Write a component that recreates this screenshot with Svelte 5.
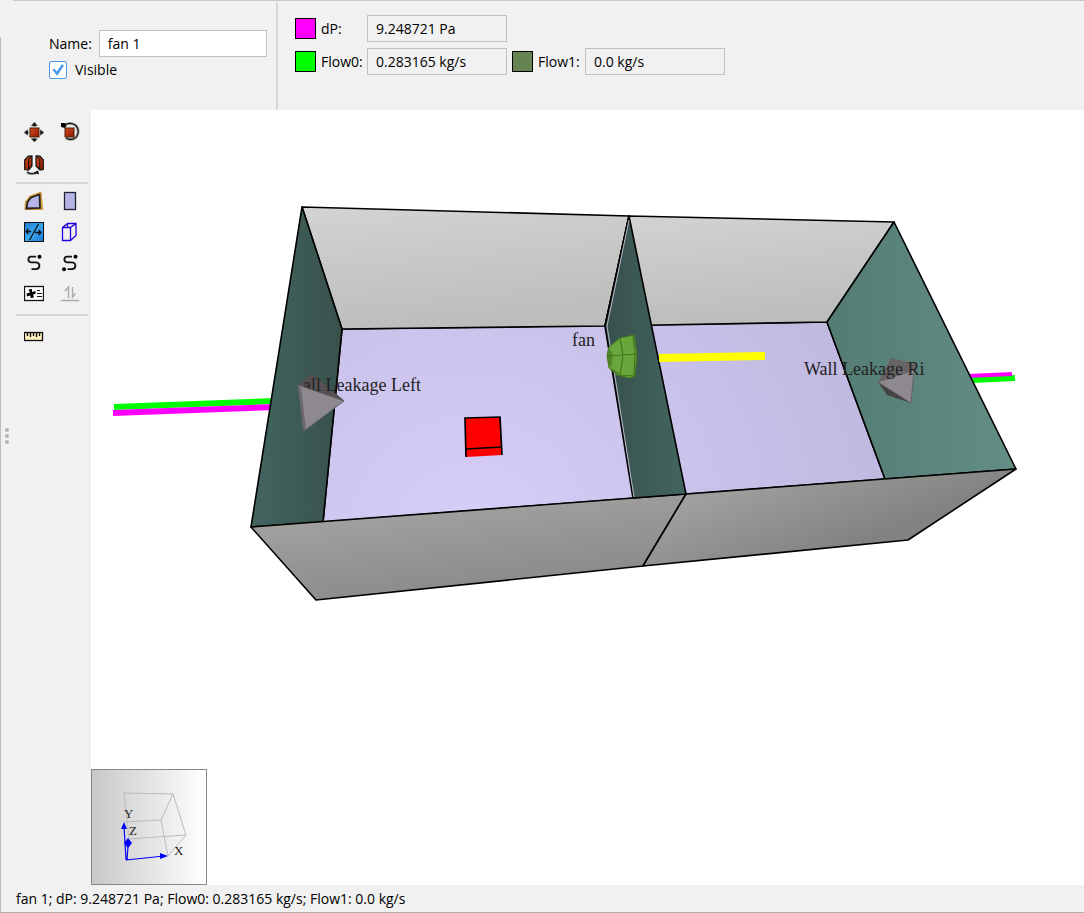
<script>
  let name = "fan 1";
  let visible = true;

  const results = [
    { id: "dp", label: "dP:", value: "9.248721 Pa", color: "#ff00ff", last: true },
    { id: "flow0", label: "Flow0:", value: "0.283165 kg/s", color: "#00ff00" },
    { id: "flow1", label: "Flow1:", value: "0.0 kg/s", color: "#678352" },
  ];

  const toolGroups = [
    { size: "tall", tools: ["Move", "Rotate", "Mirror"] },
    { size: "short", tools: ["Draw floor", "Draw room", "Draw vent", "Draw box", "Draw path", "Edit path", "Device", "Swap flow"] },
    { size: "short", tools: ["Measure"] },
  ];

  $: status =
    name + "; " + results.map((r) => r.label + " " + r.value).join("; ");
</script>

<div class="app">
  <div class="splitter"><i></i><i></i><i></i></div>
  <div class="main">
    <header>
      <form class="object" on:submit|preventDefault>
        <div class="name-row">
          <label for="name">Name:</label>
          <input id="name" type="text" bind:value={name} />
        </div>
        <label class="check">
          <input type="checkbox" bind:checked={visible} />
          Visible
        </label>
      </form>
      <div class="results">
        {#each results as r}
          <span class="swatch" style="background: {r.color}"></span>
          <label for={r.id}>{r.label}</label>
          <input id={r.id} class:last={r.last} type="text" readonly value={r.value} />
        {/each}
      </div>
    </header>

    <div class="work">
      <nav>
        {#each toolGroups as group}
          <div class="tools {group.size}">
            {#each group.tools as tool}
              <button type="button" aria-label={tool} disabled={tool === "Swap flow"}>
                <svg width="20" height="20" viewBox="0 0 20 20">
                  {#if tool === "Move"}
                    <rect x="6" y="6" width="9" height="9" fill="url(#brick)" stroke="#420" />
                    <g fill="#111" stroke="#999" stroke-width=".6">
                      <path d="M0 10.5 3.5 7.5 4.5 10.5 3.5 13.5z" />
                      <path d="M20 10.5 16.5 7.5 15.8 10.5 16.5 13.5z" />
                      <path d="M10.5 0 7 3.8 10.5 4.5 13.5 3.8z" />
                      <path d="M10.5 20 7 17 10.5 16 13.5 17z" />
                    </g>
                  {:else if tool === "Rotate"}
                    <path d="M5 3C13-1 19 4 18 11C17 17 11 19 6 16" fill="none" stroke="#aaa" stroke-width="3" />
                    <path d="M5 2.5C13-1 19 4 18 11C17 17 11 19 6 16" fill="none" stroke="#111" stroke-width="1.2" />
                    <path d="M1 1H5L6.5 4 5 6 1 5z" />
                    <rect x="5" y="6" width="9" height="9" fill="url(#brick)" stroke="#420" />
                  {:else if tool === "Mirror"}
                    <g fill="url(#brick)" stroke="#111" stroke-width="1.2">
                      <path d="M.7 5 4.5 1.2 8 1V11L4.5 15 .7 14.5z" />
                      <path d="M19.3 5 16 1.2 12 1V11L16 15 19.3 14.5z" />
                    </g>
                    <path d="M4.5 4V15M4.5 4 8 1M15.8 4V15M15.8 4 12 1" stroke="#111" />
                    <path d="M3 17C5 19 9 19 12 18" fill="none" stroke="#999" stroke-width="2.5" />
                    <path d="M3 17C5 19 9 19 12 18" fill="none" stroke="#111" />
                    <path d="M10 17.5 14 15.5 15 19.5z" />
                  {:else if tool === "Draw floor"}
                    <path d="M16 2.5 17.5 17.5 2 17.5 2.5 11 6.5 6z" fill="#b6b6e6" stroke="#d49a37" stroke-width="3" />
                    <path d="M15.5 3.5 16 17 2.5 17.5 3.5 11 7 6.5z" fill="#b6b6e6" stroke="#222" stroke-width="1.8" />
                  {:else if tool === "Draw room"}
                    <rect x="4.5" y="1.5" width="11" height="17" fill="#b4b4e8" stroke="#223" stroke-width="1.3" />
                  {:else if tool === "Draw vent"}
                    <rect x=".5" y=".5" width="19" height="19" fill="url(#sky)" stroke="#111" />
                    <path d="M5.5 18 14.5 2M2 9.5H7M11 10.5H17M14.5 8 17 10.5 14.5 13M4.5 7 2 9.5 4.5 12" fill="none" stroke="#111" stroke-width="1.3" />
                  {:else if tool === "Draw box"}
                    <path d="M2.5 5.5H10.5V18.5H2.5zM2.5 5.5 7.5 1.5H16V13.5L10.5 18.5M10.5 5.5 16 1.5M7.5 1.5V5.5" fill="none" stroke="#2000d8" stroke-width="1.3" />
                  {:else if tool === "Draw path" || tool === "Edit path"}
                    <path d="M12 3.7H7C3.5 4 3.5 9 7 9.3H12C17 10 16 16 12 16.2H7.5" fill="none" stroke="#111" stroke-width="1.8" />
                    <circle cx="15.5" cy="3.7" r="2" />
                    {#if tool === "Edit path"}<circle cx="4" cy="16.3" r="2" />{/if}
                  {:else if tool === "Device"}
                    <rect x=".5" y="2.5" width="19" height="14" fill="#fff" stroke="#111" stroke-width="1.3" />
                    <path d="M4.5 5.5 8 5 8 8 11.5 7 11.5 10 9 10.5 10 13.5 6.5 14 6.5 11.5 3 12.5 2.5 9.5 6 8.5z" />
                    <path d="M13 6.5H16M13 9.5H18M13 12.5H18" stroke="#111" stroke-width="1.2" />
                  {:else if tool === "Swap flow"}
                    <path d="M1 16.5H19M8.5 14V3L5 7M12.5 3V13L15.5 9.5" fill="none" stroke="#aaa" stroke-width="1.4" />
                  {:else}
                    <rect x=".5" y="6.5" width="18" height="8" fill="#fff0bd" stroke="#111" stroke-width="1.3" />
                    <path d="M3.5 7V10M6.5 7V11M9.5 7V10M12.5 7V11M15.5 7V10" stroke="#111" stroke-width="1.4" />
                  {/if}
                </svg>
              </button>
            {/each}
          </div>
        {/each}
      </nav>

      <div class="view">
        <svg class="scene" viewBox="91 110 993 775" role="img" aria-label="Model view">
          <defs>
            <linearGradient id="brick" x2="1" y2="1">
              <stop stop-color="#d84a20" /><stop offset="1" stop-color="#8a1800" />
            </linearGradient>
            <linearGradient id="sky" x2="1" y2="1">
              <stop stop-color="#1b78d0" /><stop offset=".5" stop-color="#3ba6f0" /><stop offset="1" stop-color="#1b78d0" />
            </linearGradient>
            <linearGradient id="back" x2=".25" y2="1">
              <stop stop-color="#d3d3d1" /><stop offset="1" stop-color="#bdbdbb" />
            </linearGradient>
            <linearGradient id="front" gradientUnits="userSpaceOnUse" x1="470" y1="508" x2="480" y2="592">
              <stop stop-color="#9f9f9d" /><stop offset="1" stop-color="#8a8a88" />
            </linearGradient>
            <linearGradient id="front-right" gradientUnits="userSpaceOnUse" x1="780" y1="470" x2="815" y2="560">
              <stop stop-color="#9e9e9c" /><stop offset="1" stop-color="#828280" />
            </linearGradient>
            <radialGradient id="floor" gradientUnits="userSpaceOnUse" cx="470" cy="540" r="430">
              <stop stop-color="#d7cff9" /><stop offset="1" stop-color="#bfb8df" />
            </radialGradient>
            <linearGradient id="dark">
              <stop stop-color="#43655f" /><stop offset="1" stop-color="#38514c" />
            </linearGradient>
            <linearGradient id="middle">
              <stop stop-color="#38514d" /><stop offset="1" stop-color="#43655f" />
            </linearGradient>
            <linearGradient id="teal">
              <stop stop-color="#547c73" /><stop offset="1" stop-color="#628e86" />
            </linearGradient>
          </defs>

          <!-- pressure and flow bars behind the walls -->
          <path d="M114 407 275 401M972 380 1015 378" stroke="#0f0" stroke-width="6" />
          <path d="M113 413 275 407" stroke="#f0f" stroke-width="6" />
          <path d="M968 376 1012 374" stroke="#f0f" stroke-width="4" />

          <!-- rooms -->
          <g stroke="#000" stroke-width="1.6" stroke-linejoin="round">
            <path d="M342 329 827 322 885 479 323 522z" fill="url(#floor)" />
            <path d="M302 207 629 216 605 326 342 329z" fill="url(#back)" />
            <path d="M629 216 894 222 827 322 605 326z" fill="url(#back)" />
            <path d="M302 207 342 329 323 522 251 527z" fill="url(#dark)" />
            <path d="M894 222 1016 469 885 479 827 322z" fill="url(#teal)" />
            <path d="M251 527 686 494 643 566 316 600z" fill="url(#front)" />
            <path d="M686 494 1016 469 908 540 643 566z" fill="url(#front-right)" />
            <path d="M629 216 605 326 633 498 686 494z" fill="url(#middle)" />
          </g>
          <path d="M629 220 607 326 634 497" fill="none" stroke="#c8c2d8" stroke-width=".9" />
          <path d="M659 358 765 356" stroke="#ff0" stroke-width="8" />

          <!-- occupant block -->
          <path d="M465 418 500 417 502 455 466 457z" fill="#f00" />
          <path d="M466 457 465 418 500 417 502 455M466 449 501 447" fill="none" stroke="#000" stroke-width="1.7" />

          <!-- fan -->
          <path d="M634 335 637 354 635 376 630 378 617 375 609 368 607 355 609 347 620 338z" fill="#69a63b" stroke="#477723" />
          <path d="M609 347 613 355 611 368 608 362 607 353z" fill="#4d8429" />
          <path d="M620 338 623 355 620 376M607 356 637 354M633 336 635 354 634 376M611 369 621 375 634 376" fill="none" stroke="#42771f" stroke-width="1.2" />

          <!-- leakage markers -->
          <path d="M298 385 312 374 344 401z" fill="#555153" stroke="#4c494b" />
          <path d="M878 382 891 358 916 364 914 372z" fill="#676466" />
          <path d="M878 382 887 395 911 403z" fill="#454244" />
          <path d="M878 382 914 370 911 403z" fill="#8d898e" stroke="#666366" />
          <text x="303" y="391">all Leakage Left</text>
          <text x="804" y="375">Wall Leakage Ri</text>
          <text x="572" y="346">fan</text>
          <path d="M298 385 344 401 304 431z" fill="#8d898e" stroke="#666366" />
          <path d="M298 385 301 388 306 430 303 430z" fill="#6b686b" />
        </svg>

        <div class="axes">
          <svg viewBox="0 0 114 114" role="img" aria-label="Axes">
            <path d="M32 23 81 24 94 65 37 69zM32 52 69 50 76 86M81 24 69 50M94 65 76 86" fill="none" stroke="#bbb" />
            <path d="M34 90 32 56M35 90 36 76M34 90 72 86" stroke="#00f" stroke-width="1.2" />
            <path d="M32 52 29 59 35 59zM76 86 68 83 68 89zM36 68 32 73 36 78 40 73z" fill="#00f" />
            <text x="32" y="48">Y</text>
            <text x="37" y="65">Z</text>
            <text x="82" y="85">X</text>
          </svg>
        </div>
      </div>
    </div>

    <footer>{status}</footer>
  </div>
</div>

<style>
  :global(body) {
    margin: 0;
  }

  .app {
    display: flex;
    min-height: 100vh;
    box-sizing: border-box;
    border-bottom: 1px solid #b0b0b0;
    background: #f1f1f1;
    color: #000;
    font: 14px/20px "Open Sans", "Noto Sans", sans-serif;
  }

  .splitter {
    display: flex;
    flex-direction: column;
    justify-content: center;
    align-items: center;
    gap: 2px;
    width: 12px;
    margin-top: 37px;
    padding-bottom: 78px;
    border-left: 1px solid #bbb;
  }

  .splitter i {
    width: 4px;
    height: 4px;
    border-radius: 50%;
    background: #b4b4b4;
  }

  .main {
    flex: 1;
    min-width: 0;
    display: flex;
    flex-direction: column;
  }

  header {
    display: flex;
    border-top: 1px solid #c8c8c8;
    min-height: 109px;
  }

  .object {
    box-sizing: border-box;
    width: 265px;
    padding: 28px 9px 0 36px;
    margin-top: 1px;
    border-right: 2px solid #d8d8d8;
  }

  .name-row {
    display: flex;
    align-items: center;
    gap: 7px;
  }

  .name-row input {
    flex: 1;
    min-width: 0;
    background: #fff;
  }

  input {
    box-sizing: border-box;
    height: 27px;
    margin: 0;
    padding: 0 8px;
    border: 1px solid #c1c1c1;
    background: #f1f1f1;
    color: inherit;
    font: inherit;
  }

  .check {
    display: flex;
    align-items: center;
    gap: 8px;
    margin-top: 3px;
  }

  .check input {
    appearance: none;
    width: 18px;
    height: 18px;
    padding: 2px;
    border: 1px solid #4c9be8;
    border-radius: 2px;
    background: #fff;
  }

  .check input:checked::before {
    content: "";
    display: block;
    width: 12px;
    height: 12px;
    background: #4c9be8;
    clip-path: polygon(4% 50%, 20% 38%, 40% 62%, 82% 2%, 100% 12%, 44% 98%);
  }

  .results {
    display: grid;
    grid-template-columns: 21px 41px 140px 21px 42px 140px;
    grid-auto-rows: 27px;
    align-items: center;
    align-content: start;
    gap: 6px 5px;
    padding: 14px 17px;
  }

  .results label {
    white-space: nowrap;
  }

  .results .last {
    grid-column-end: span 4;
    width: 140px;
  }

  .swatch {
    box-sizing: border-box;
    height: 21px;
    border: 1px solid #000;
  }

  .work {
    flex: 1;
    display: flex;
  }

  nav {
    box-sizing: border-box;
    width: 78px;
    padding: 5px 3px 0;
  }

  .tools {
    display: grid;
    grid-template-columns: 36px 36px;
    grid-auto-rows: 31px;
  }

  .tall {
    grid-auto-rows: 33px;
  }

  .tools + .tools {
    border-top: 2px solid #d4d4d4;
    margin-top: 1px;
    padding-top: 1px;
  }

  .short + .short {
    margin-top: 5px;
    padding-top: 4px;
  }

  button {
    display: grid;
    place-items: center;
    padding: 0;
    border: 0;
    background: none;
  }

  .view {
    position: relative;
    flex: 1;
    min-width: 0;
    background: #fff;
  }

  .scene {
    display: block;
    width: 100%;
  }

  .scene text {
    font: 18px "Liberation Serif", serif;
    fill: #222;
  }

  .axes {
    position: absolute;
    left: 0;
    bottom: 0;
    box-sizing: border-box;
    width: 116px;
    height: 116px;
    border: 1px solid #888;
    background: linear-gradient(to right, #c8c8c8, #fff);
  }

  .axes text {
    font: 13px "Liberation Serif", serif;
    fill: #222;
  }

  footer {
    padding: 4px 3px 3px;
  }
</style>
